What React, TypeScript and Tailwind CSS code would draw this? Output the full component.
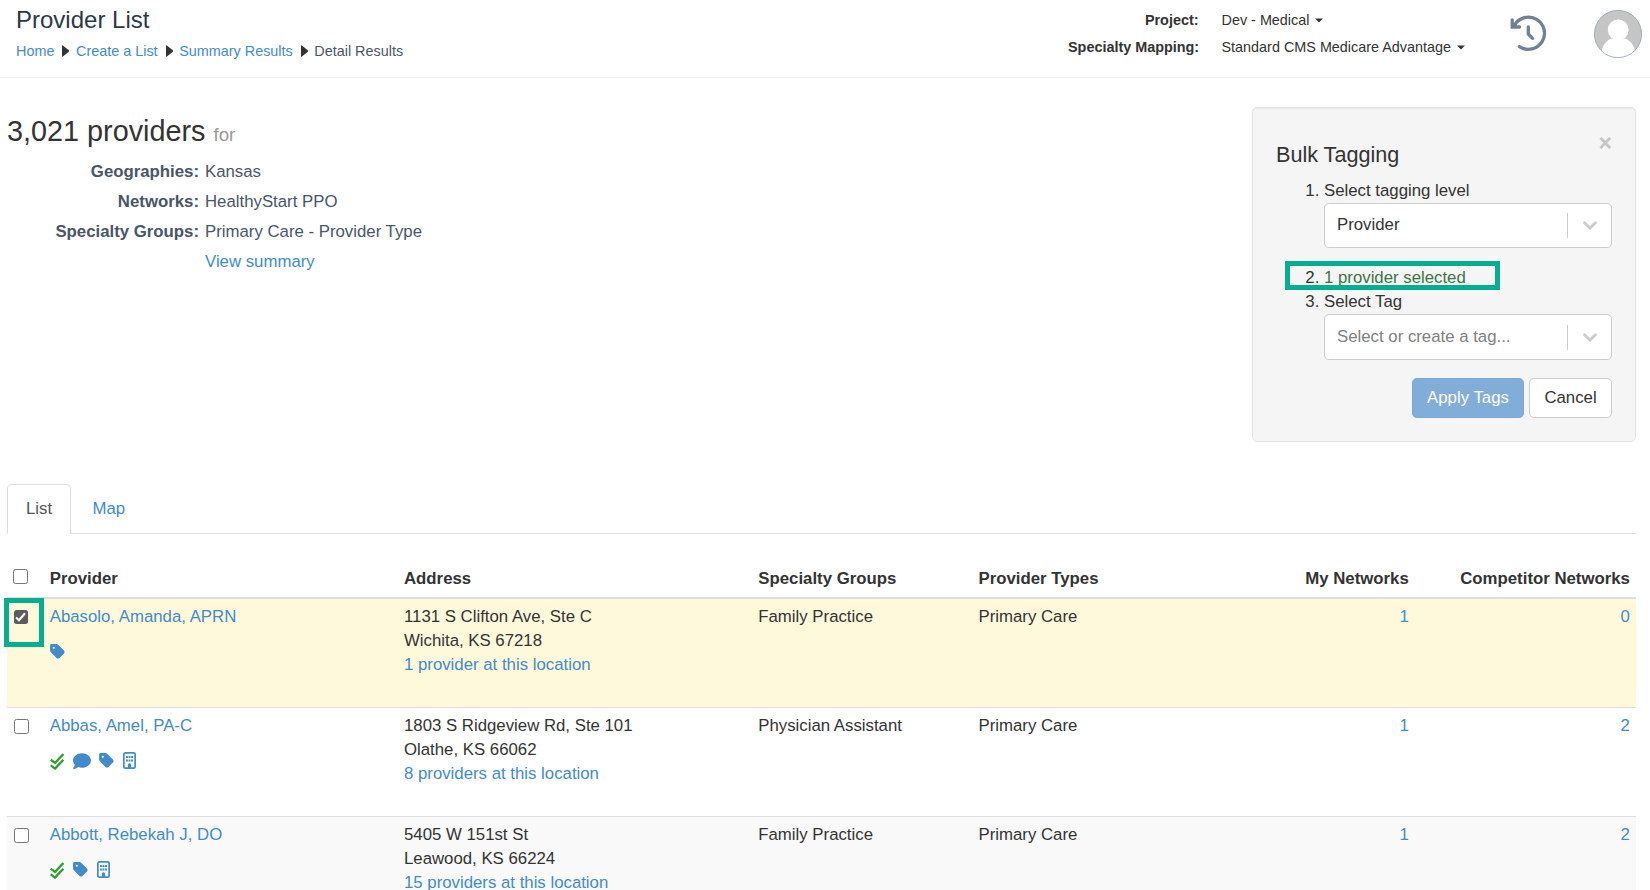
import React from "react";
import { FaTag, FaComment } from "react-icons/fa6";

const link = "text-[#428bca]";

const Arrow = () => (
  <svg className="ml-[8px] mr-[6px] mb-px h-[12px] w-[7.6px] fill-[#333]" viewBox="0 0 7.6 12">
    <path d="M0 0.8Q0 0 0.9 0.4L6.8 5.2Q7.6 6 6.8 6.8L0.9 11.6Q0 12 0 11.2Z" />
  </svg>
);

const Caret = () => (
  <svg className="ml-[6px] h-[5px] w-[8px] fill-[#333]" viewBox="0 0 8 4">
    <path d="M0 0H8L4 4Z" />
  </svg>
);

const Checks = () => (
  <svg className="mr-[9px] h-[18px] w-[14px] fill-none stroke-[#2ca02c]" viewBox="0 0 14 18" strokeWidth="2.3">
    <path d="M0.7 7.6L5 11L13.4 2M0.7 13.4L5 16.6L13.4 7.8" />
  </svg>
);

const Building = () => (
  <svg className="h-[17px] w-[13px]" viewBox="0 0 13 17">
    <rect x="0.85" y="0.85" width="11.3" height="15.3" rx="1.5" fill="none" stroke="#428bca" strokeWidth="1.7" />
    <path
      fill="#428bca"
      d="M3 4h1.9v2H3zM5.55 4h1.9v2h-1.9zM8.1 4H10v2H8.1zM3 7.6h1.9v2H3zM5.55 7.6h1.9v2h-1.9zM8.1 7.6H10v2H8.1zM4.9 16v-3.2a1.6 1.6 0 0 1 3.2 0V16z"
    />
  </svg>
);
const Tag = () => <FaTag className="mr-[9px] h-[17px] w-[15px] text-[#428bca]" />;
const Comment = () => <FaComment className="mr-[8px] h-[18px] w-[18px] text-[#428bca]" />;

const icons: Record<string, React.ReactNode> = {
  checks: <Checks />,
  comment: <Comment />,
  tag: <Tag />,
  building: <Building />,
};

function Checkbox({ checked = false }: { checked?: boolean }) {
  return checked ? (
    <span className="flex h-[14px] w-[14px] items-center justify-center rounded-[2.5px] bg-[#5c5c5c]">
      <svg className="h-[10px] w-[11px] fill-none stroke-white" viewBox="0 0 11 10" strokeWidth="2.1">
        <path d="M1 5.4L4 8.2L10 1.2" />
      </svg>
    </span>
  ) : (
    <span className="block h-[15px] w-[15px] rounded-[2.5px] border border-[#767676] bg-white" />
  );
}

function Select({ text, muted, className }: { text: string; muted?: boolean; className: string }) {
  return (
    <div className={`flex w-[288px] items-center rounded-[4.8px] border border-[#ccc] bg-white ${className}`}>
      <span className={`flex-1 pl-[12px] ${muted ? "pb-px text-[#808080]" : "pb-[2px] text-[#333]"}`}>{text}</span>
      <span className="h-[25px] w-px bg-[#ccc]" />
      <svg className="mr-[14px] ml-[15px] h-[9px] w-[14px] fill-none stroke-[#ccc]" viewBox="0 0 14 9" strokeWidth="2.9" strokeLinecap="round">
        <path d="M1.6 1.8L7 7L12.4 1.8" />
      </svg>
    </div>
  );
}

const rows = [
  {
    name: "Abasolo, Amanda, APRN", icons: ["tag"], a1: "1131 S Clifton Ave, Ste C", a2: "Wichita, KS 67218",
    loc: "1 provider at this location", group: "Family Practice", my: 1, comp: 0, checked: true, bg: "bg-[#fff9db]",
  },
  {
    name: "Abbas, Amel, PA-C", icons: ["checks", "comment", "tag", "building"], a1: "1803 S Ridgeview Rd, Ste 101", a2: "Olathe, KS 66062",
    loc: "8 providers at this location", group: "Physician Assistant", my: 1, comp: 2, checked: false, bg: "bg-white",
  },
  {
    name: "Abbott, Rebekah J, DO", icons: ["checks", "tag", "building"], a1: "5405 W 151st St", a2: "Leawood, KS 66224",
    loc: "15 providers at this location", group: "Family Practice", my: 1, comp: 2, checked: false, bg: "bg-[#f9f9f9]",
  },
];

const cols = "grid grid-cols-[36.7px_354.3px_354.3px_220.2px_219px_217.3px_227.2px]";

const filters = [
  ["Geographies:", "Kansas"],
  ["Networks:", "HealthyStart PPO"],
  ["Specialty Groups:", "Primary Care - Provider Type"],
];

export default function App() {
  return (
    <div className="h-[890px] w-[1650px] overflow-hidden bg-white font-['Liberation_Sans',Arial,sans-serif] text-[16.8px] leading-[24px] text-[#333]">
      <header className="flex h-[78px] justify-between border-b border-[#eee]">
        <div className="pl-[16px] pt-[6px]">
          <h1 className="text-[24px] leading-[28px] text-[#2d3748]">Provider List</h1>
          <nav className="mt-[7px] flex items-center text-[14.4px] leading-[20px]">
            <span className={link}>Home</span>
            <Arrow />
            <span className={link}>Create a List</span>
            <Arrow />
            <span className={link}>Summary Results</span>
            <Arrow />
            <span className="text-[#4a5568]">Detail Results</span>
          </nav>
        </div>
        <div className="flex">
          <div className="grid h-[54px] w-[442px] grid-cols-[130.5px_1fr] gap-x-[23px] pt-[7px] text-[14.4px] leading-[27px]">
            <b className="text-right">Project:</b>
            <span className="flex items-center">Dev - Medical <Caret /></span>
            <b className="text-right whitespace-nowrap">Specialty Mapping:</b>
            <span className="flex items-center whitespace-nowrap">Standard CMS Medicare Advantage <Caret /></span>
          </div>
          <svg className="mt-[15px] h-[37px] w-[37px] fill-none stroke-[#718096]" viewBox="0 0 37 37" strokeWidth="3.3" strokeLinecap="round">
            <path d="M2.2 4.8V12H9.6M4 11A16.1 16.1 0 1 1 9.4 31.6" />
            <path d="M18.3 11.8V19L22.6 23.3" />
          </svg>
          <svg className="ml-[47px] mr-[8px] mt-[10px] h-[48px] w-[48px]" viewBox="0 0 48 48">
            <defs><clipPath id="avatar"><circle cx="24" cy="24" r="23.7" /></clipPath></defs>
            <g clipPath="url(#avatar)">
              <rect width="48" height="48" fill="#c5c5c5" />
              <circle cx="24.2" cy="19.8" r="10.4" fill="#fff" />
              <path d="M6.5 48C7 38 11 31 17.5 28.6H31C38 31 41.5 38 42 48Z" fill="#fff" />
            </g>
            <circle cx="24" cy="24" r="23.6" fill="none" stroke="#94a3b8" strokeWidth="0.8" />
          </svg>
        </div>
      </header>

      <section className="flex h-[406px] items-start justify-between pl-[7px] pr-[14px] pt-[29px]">
        <div className="pt-[8px]">
          <h2 className="text-[28.8px] leading-[32px]">
            3,021 providers <small className="text-[18.72px] text-[#999]">for</small>
          </h2>
          <div className="mt-[6px] grid grid-cols-[192px_auto] gap-x-[6px] leading-[30px] text-[#4a5568]">
            {filters.map(([k, v]) => (
              <React.Fragment key={k}>
                <b className="text-right">{k}</b>
                <span>{v}</span>
              </React.Fragment>
            ))}
            <span />
            <span className={link}>View summary</span>
          </div>
        </div>

        <aside className="relative h-[335px] w-[384px] rounded-[4.8px] border border-[#e3e3e3] bg-[#f5f5f5] pl-[23px] shadow-[inset_0_1px_1px_rgba(0,0,0,0.05)]">
          <span className="absolute right-[23px] top-[22px] text-[23px] leading-[26px] font-bold text-[#c4c4c4]">×</span>
          <h3 className="pt-[34px] text-[21.6px] leading-[26px]">Bulk Tagging</h3>
          <ol className="mt-[11px] list-decimal pl-[48px]">
            <li className="h-[87px]">
              Select tagging level
              <Select className="h-[45px]" text="Provider" />
            </li>
            <li className="text-[#333]"><span className="text-[#3c763d]">1 provider selected</span></li>
            <li>
              Select Tag
              <Select className="h-[46px]" text="Select or create a tag..." muted />
            </li>
          </ol>
          <div className="mt-[18px] flex justify-end gap-[5px] pr-[23px]">
            <button className="h-[40px] w-[112px] rounded-[4.8px] border border-[#7aa7d3] bg-[#81aed9] text-white">Apply Tags</button>
            <button className="h-[40px] w-[83px] rounded-[4.8px] border border-[#ccc] bg-white">Cancel</button>
          </div>
          <div className="absolute left-[32px] top-[153px] h-[29px] w-[215px] border-[5px] border-[#05ae8e]" />
        </aside>
      </section>

      <main className="pl-[7px] pr-[14px]">
        <div className="flex h-[50px] border-b border-[#ddd]">
          <div className="h-[50px] w-[64px] rounded-t-[4.8px] border border-b-0 border-[#ddd] bg-white pl-[18px] pt-[12px] text-[#555]">List</div>
          <div className={`pl-[21.5px] pt-[13px] ${link}`}>Map</div>
        </div>

        <div className={`${cols} h-[65px] border-b-2 border-[#ddd] pt-[33px] font-bold`}>
          <span className="pl-[6.4px] pt-[2px]"><Checkbox /></span>
          <span className="pl-[6px]">Provider</span>
          <span className="pl-[6px]">Address</span>
          <span className="pl-[6px]">Specialty Groups</span>
          <span className="pl-[6px]">Provider Types</span>
          <span className="text-right">My Networks</span>
          <span className="pr-[6px] text-right">Competitor Networks</span>
        </div>

        {rows.map((r) => (
          <div key={r.name} className={`${cols} relative h-[109px] border-b border-[#ddd] pt-[6px] ${r.bg}`}>
            <span className="pl-[6.6px] pt-[5px]"><Checkbox checked={r.checked} /></span>
            <div className="pl-[6px]">
              <div className={link}>{r.name}</div>
              <div className="mt-[14px] flex h-[17px] items-center">
                {r.icons.map((i) => <React.Fragment key={i}>{icons[i]}</React.Fragment>)}
              </div>
            </div>
            <div className="pl-[6px]">
              <div>{r.a1}</div>
              <div>{r.a2}</div>
              <div className={link}>{r.loc}</div>
            </div>
            <span className="pl-[6px]">{r.group}</span>
            <span className="pl-[6px]">Primary Care</span>
            <span className={`text-right ${link}`}>{r.my}</span>
            <span className={`pr-[6px] text-right ${link}`}>{r.comp}</span>
            {r.checked && <div className="absolute left-[-3px] top-[-1px] h-[49px] w-[40px] border-[5px] border-[#05ae8e]" />}
          </div>
        ))}
      </main>
    </div>
  );
}
